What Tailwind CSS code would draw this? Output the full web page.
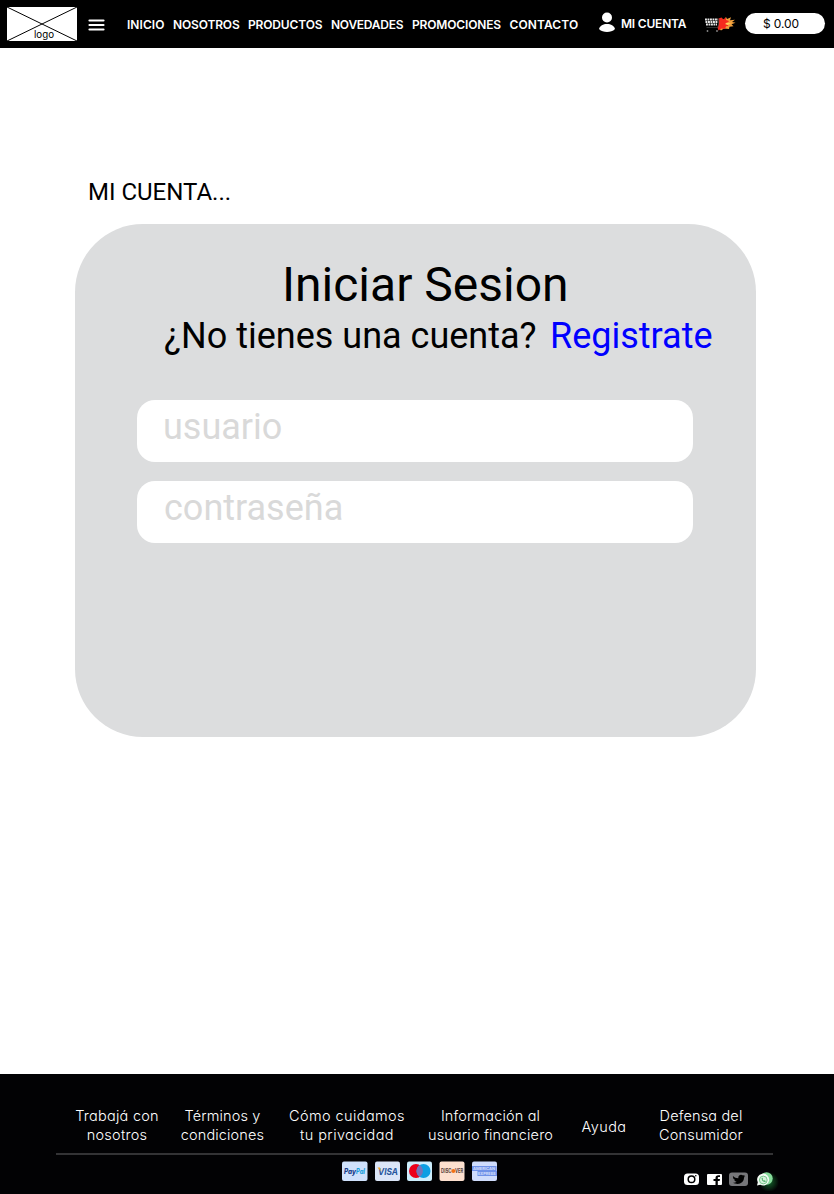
<!DOCTYPE html>
<html lang="es">
<head>
<meta charset="utf-8">
<title>Mi cuenta</title>
<script src="https://cdn.jsdelivr.net/npm/@tailwindcss/browser@4"></script>
</head>
<body class="bg-white">
<div class="flex h-[1194px] w-[834px] flex-col overflow-hidden font-['Roboto',sans-serif] text-black">
  <header class="flex h-12 shrink-0 bg-black font-['Inter',sans-serif] text-[12px] leading-[18px] font-semibold whitespace-nowrap text-white">
    <svg class="mt-[7px] ml-[7px] h-[34px] w-[70px] shrink-0" viewBox="0 0 70 34">
      <rect width="70" height="34" fill="#fff"/>
      <path d="M0 0L70 34M0 34L70 0" stroke="#000" stroke-width="1"/>
      <text x="27" y="30.500" font-size="10" font-weight="400" textLength="20" lengthAdjust="spacingAndGlyphs" fill="#000">logo</text>
    </svg>
    <svg class="mt-[18px] ml-[11px] h-[14px] w-[17px] shrink-0" viewBox="0 0 17 14"><path d="M1.500 2.500h14M1.500 7h14M1.500 11.500h14" stroke="#fff" stroke-width="2.200" stroke-linecap="round"/></svg>
    <nav class="mt-4 ml-[22px] flex w-[460px] shrink-0">
      <a class="w-[46px] tracking-[0.05px]">INICIO</a>
      <a class="w-[75px] tracking-[-0.15px]">NOSOTROS</a>
      <a class="w-[83px] tracking-[-0.15px]">PRODUCTOS</a>
      <a class="w-[81px] tracking-[-0.25px]">NOVEDADES</a>
      <a class="w-[97.500px] tracking-[-0.15px]">PROMOCIONES</a>
      <a class="w-[77px] tracking-[0.1px]">CONTACTO</a>
    </nav>
    <svg class="mt-3 ml-[11px] h-5 w-[18px] shrink-0" viewBox="0 0 18 20" fill="#fff"><circle cx="9" cy="5.500" r="5"/><path d="M1 17C2 13.500 5 12 9 12s7 1.500 8 5c-2 2.200-5 3-8 3s-6-.8-8-3z"/></svg>
    <a class="mt-[15px] ml-[5px] w-[83px] shrink-0 tracking-[-0.2px]">MI CUENTA</a>
    <svg class="mt-4 h-[18px] w-[32px] shrink-0" viewBox="0 0 32 18">
      <path d="M16 2.500l4 1 2-2.500 1 2 4-1.800-1 3 5-.5-3 2.300 3.500.8-4 1.500 2 2-4 .4-.5 2.300-5-.5-3 2-2-2z" fill="#f2a03c"/>
      <path d="M14.500 2.500l3-.9 2 1.900 2.500-2v2.500l3 1-2 2.500 1.500 2.500-2.500.2-1 2.800-3.500-.5-3 2-1-3 1.500-4z" fill="#f52a1e"/>
      <path d="M21 8l2-1.500 4 1-3.500 1.500z" fill="#ffd25a"/>
      <path d="M1 3.500h13M1.500 6h12M2 8.500h11" stroke="#e8e8e8" stroke-width="1.800" stroke-dasharray="1.900 .6"/>
      <path d="M2.500 11.500h11.500l1-9" stroke="#444" fill="none" stroke-width=".7"/>
      <circle cx="3.500" cy="15" r=".9" fill="#888"/><circle cx="13" cy="15" r=".9" fill="#888"/>
    </svg>
    <div class="mt-[13px] ml-[9px] h-[21px] w-20 shrink-0 rounded-full bg-white pt-[2px] pl-[18px] font-normal tracking-[-0.1px] text-black">$ 0.00</div>
  </header>

  <main class="flex-1">
    <h1 class="mt-[130px] ml-[88px] text-[24px] leading-7">MI CUENTA...</h1>
    <section class="mt-[18px] ml-[75px] h-[513px] w-[681px] rounded-[68px] bg-[#dcddde] pt-[33px] text-[36px] leading-[42px]">
      <h2 class="pl-[207px] text-[48px] leading-[56px]">Iniciar Sesion</h2>
      <p class="mt-[2px] flex pl-[89px] whitespace-nowrap"><span class="w-[386px]">¿No tienes una cuenta?</span><a class="text-[#0000ff]">Registrate</a></p>
      <div class="mt-[43px] ml-[62px] h-[62px] w-[556px] rounded-[18px] bg-white pt-[6px] pl-[26px] text-[#d9d9d9]">usuario</div>
      <div class="mt-[19px] ml-[62px] h-[62px] w-[556px] rounded-[18px] bg-white pt-[6px] pl-[27px] text-[#d9d9d9]">contraseña</div>
    </section>
  </main>

  <footer class="h-[120px] shrink-0 bg-[#020204] pt-8 font-['Inter',sans-serif] text-[14.5px] leading-[19px] font-light text-white">
    <div class="ml-[57px] flex h-[46px] w-[716px] text-center tracking-[0.15px] whitespace-nowrap [font-feature-settings:'cv11']">
      <a class="w-[120px] tracking-[0.25px]">Trabajá con<br>nosotros</a>
      <a class="w-[91px]">Términos y<br>condiciones</a>
      <a class="w-[158px] tracking-[0.4px]">Cómo cuidamos<br>tu privacidad</a>
      <a class="w-[129px]">Información al<br>usuario financiero</a>
      <a class="w-[98px] pt-[11px] tracking-[0.4px]">Ayuda</a>
      <a class="w-[96px]">Defensa del<br>Consumidor</a>
    </div>
    <div class="mt-[0.500px] ml-14 h-[2px] w-[717px] bg-[#333335]"></div>
    <div class="flex">
      <svg class="mt-[6px] ml-[342px] h-[20px] w-[155px]" viewBox="0 0 155 20" font-family="Inter, sans-serif">
        <rect x="0" y=".5" width="25.500" height="19.500" rx="2" fill="#cfe1fc"/>
        <text x="2" y="12.500" font-size="7" font-weight="800" font-style="italic" textLength="12" lengthAdjust="spacingAndGlyphs" fill="#173a86">Pay</text>
        <text x="14" y="12.500" font-size="7" font-weight="800" font-style="italic" textLength="9" lengthAdjust="spacingAndGlyphs" fill="#18a0dc">Pal</text>
        <rect x="33" y=".5" width="25" height="19.500" rx="2" fill="#dbe6f8"/>
        <text x="36" y="13.500" font-size="9.500" font-weight="700" font-style="italic" textLength="20" lengthAdjust="spacingAndGlyphs" fill="#27569c">VISA</text>
        <path d="M35.500 6.500h2.500l1 4z" fill="#f5a623"/>
        <rect x="65" y=".5" width="25" height="19.500" rx="2" fill="#cdeefd"/>
        <circle cx="74" cy="10" r="7" fill="#eb001b"/><circle cx="81.500" cy="10" r="7" fill="#0c9fe3"/><path d="M77.700 4.100a7 7 0 0 1 0 11.800a7 7 0 0 1 0-11.800" fill="#7773b8"/>
        <rect x="97.500" y=".5" width="25" height="19.500" rx="2" fill="#fde0cf"/>
        <g font-size="5.500" font-weight="700" fill="#55403a">
          <text x="99" y="12" textLength="10.500" lengthAdjust="spacingAndGlyphs">DISC</text>
          <text x="113" y="12" textLength="8" lengthAdjust="spacingAndGlyphs">VER</text>
        </g>
        <circle cx="111.300" cy="10" r="2" fill="#f47216"/>
        <rect x="130" y=".5" width="25" height="19.500" rx="2" fill="#cfdcfc"/>
        <path d="M130 5h24.500v5h.5v5h-19.500v-5h-5.500z" fill="#6f91e8"/>
        <g font-size="4" font-weight="700" fill="#d3defc"><text x="131" y="9" textLength="22" lengthAdjust="spacingAndGlyphs">AMERICAN</text><text x="136" y="14" textLength="17.500" lengthAdjust="spacingAndGlyphs">EXPRESS</text></g>
      </svg>
      <svg class="mt-[12px] ml-[187px] h-6 w-[98px]" viewBox="0 0 98 24">
        <defs><radialGradient id="glow"><stop offset="0" stop-color="#1f9a42" stop-opacity=".65"/><stop offset="1" stop-color="#1f9a42" stop-opacity="0"/></radialGradient></defs>
        <rect x="0" y="6.500" width="15" height="11.500" rx="3.500" fill="#fff"/>
        <circle cx="7.500" cy="12.300" r="3.300" fill="none" stroke="#000" stroke-width="1.500"/><circle cx="11.800" cy="8.800" r=".8" fill="#000"/>
        <rect x="23" y="7" width="15" height="11" rx="1" fill="#fff"/>
        <path d="M31.500 18v-4h-2v-2h2v-1c0-2 1-2.800 3-2.800h1.500V10h-1.200c-.8 0-1 .3-1 1v1h2.200l-.4 2h-1.800v4z" fill="#000"/>
        <rect x="45" y="5.500" width="19" height="13.500" rx="3" fill="#77777a"/>
        <path d="M49 9c1.500 1.500 3 2.200 5.300 2.200C54 9 55.500 7.800 57 7.800c.9 0 1.500.3 2 .8l1.700-.6-.8 1.500 1.400-.2-1.300 1.300c0 4-3 6.300-6.300 6.300-1.900 0-3.500-.5-4.700-1.200 1.500 0 2.600-.3 3.600-1-1.300-.2-2-.8-2.400-1.700h1c-1.300-.5-2-1.300-2.200-2.400l1 .2C49 10.500 48.700 10 49 9z" fill="#000"/>
        <circle cx="85" cy="15" r="10" fill="url(#glow)"/>
        <circle cx="82.500" cy="11.500" r="6.200" fill="#86dc9b"/>
        <path d="M73 18.500l.8-3.200a6 6 0 1 1 2.400 2.500z" fill="#f4fcf5"/>
        <circle cx="79.300" cy="13" r="3.900" fill="#d6f3dc" stroke="#5fbb77" stroke-width=".8"/><path d="M77.600 11c0 2.500 1.500 4 3.700 4l.4-1-1.300-.7-.6.500-1.200-1.200.4-.7-.6-1.200z" fill="#45aa60"/>
      </svg>
    </div>
  </footer>
</div>
</body>
</html>
